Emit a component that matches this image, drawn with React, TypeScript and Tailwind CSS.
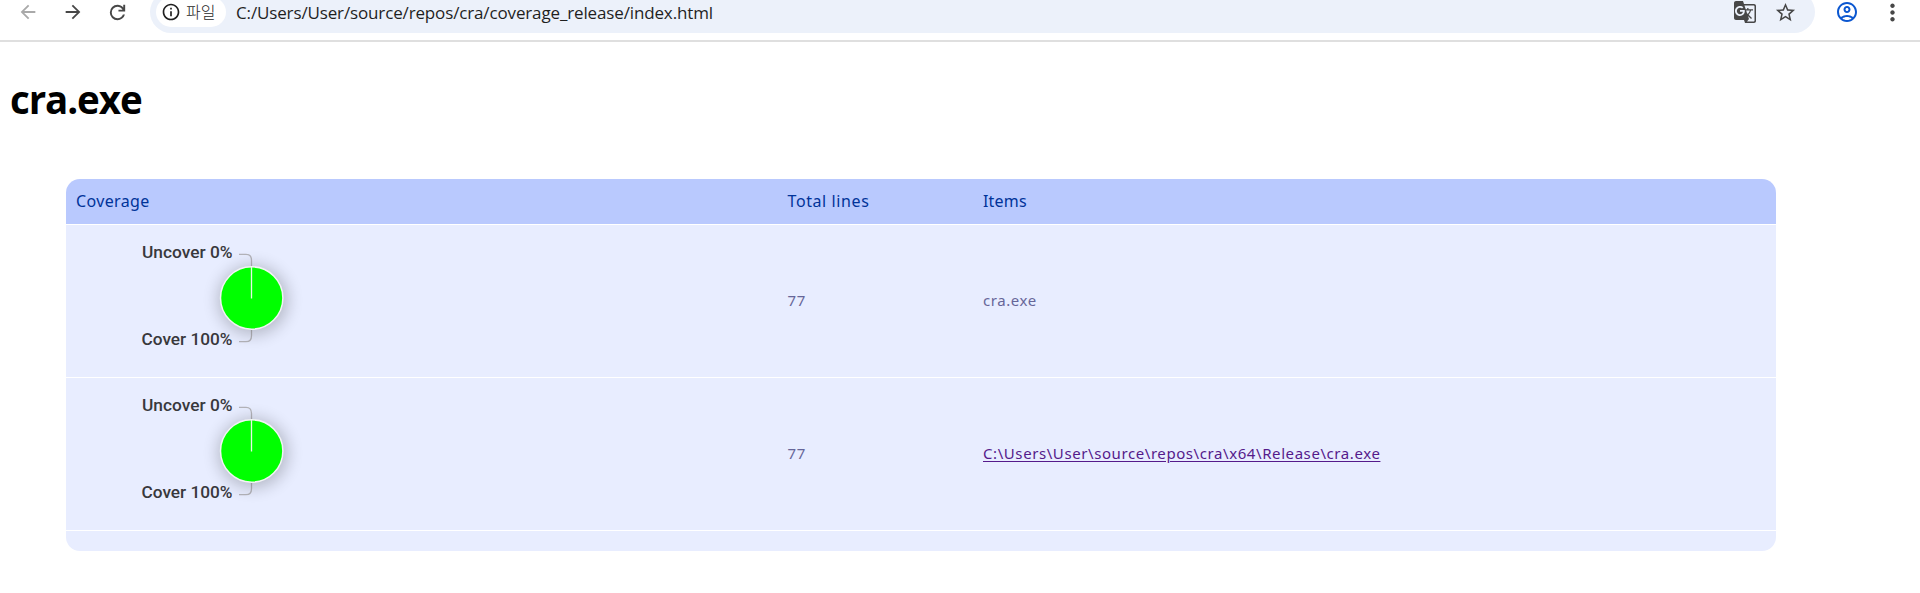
import React from "react";
import {
  MdArrowBack,
  MdArrowForward,
  MdGTranslate,
  MdInfoOutline,
  MdMoreVert,
  MdOutlineAccountCircle,
  MdStarBorder,
} from "react-icons/md";

function ReloadIcon() {
  return (
    <svg viewBox="0 -960 960 960" className="size-[23px] fill-current">
      <path d="M480-160q-134 0-227-93t-93-227q0-134 93-227t227-93q69 0 132 28.5T720-690v-110h80v280H520v-80h168q-32-56-87.5-88T480-720q-100 0-170 70t-70 170q0 100 70 170t170 70q77 0 139-44t87-116h84q-28 106-114 173t-196 67Z" />
    </svg>
  );
}

function Toolbar() {
  return (
    <header className="flex h-[42px] items-start border-b-2 border-[#dfdfdf] bg-white">
      <div className="-mt-[9px] flex h-[42px] w-full items-center text-[#474747]">
        <MdArrowBack className="ml-[17px] size-[22px] shrink-0 text-[#a9a9a9]" />
        <MdArrowForward className="ml-[23px] size-[22px] shrink-0" />
        <span className="ml-[22px] shrink-0">
          <ReloadIcon />
        </span>
        <div className="ml-[21px] flex h-[42px] w-[1665px] shrink-0 items-center rounded-full bg-[#ecf1fa] pl-[6px]">
          <div className="flex h-[30px] w-[70px] shrink-0 items-center rounded-full bg-white pl-[5px] text-[#1f1f1f]">
            <MdInfoOutline className="size-5 shrink-0" />
            <span className="ml-[5px] pb-[2px] font-['Noto_Sans_CJK_KR',sans-serif] text-[16px] leading-5 font-light whitespace-nowrap">
              파일
            </span>
          </div>
          <span className="ml-[10px] pt-[2px] font-['Open_Sans',sans-serif] text-[17px] leading-6 tracking-[-0.14px] whitespace-nowrap text-[#1f1f1f]">
            C:/Users/User/source/repos/cra/coverage_release/index.html
          </span>
          <MdGTranslate className="mr-[17px] ml-auto size-6" />
          <MdStarBorder className="mr-[18px] size-[23px]" />
        </div>
        <MdOutlineAccountCircle className="ml-[20px] size-6 shrink-0 text-[#0b57d0]" />
        <MdMoreVert className="ml-[20px] size-[27px] shrink-0" />
      </div>
    </header>
  );
}

function CoverageChart() {
  return (
    <svg width="360" height="152" viewBox="0 0 360 152" className="block">
      <defs>
        <filter id="shade" x="-60%" y="-60%" width="220%" height="220%">
          <feGaussianBlur stdDeviation="8" />
        </filter>
      </defs>
      <g className="fill-[#38383c] font-['Roboto',sans-serif] text-[16px] font-medium">
        <text x="76" y="32.6" textLength="90.5" lengthAdjust="spacingAndGlyphs">
          Uncover 0%
        </text>
        <text x="75.5" y="120" textLength="91" lengthAdjust="spacingAndGlyphs">
          Cover 100%
        </text>
      </g>
      <g fill="none" stroke="#b4b4ba" strokeWidth="1.3">
        <path d="M173 29.3h7q5.5 0 5.5 6v7" />
        <path d="M173 116.7h7q5.5 0 5.5-6v-7" />
      </g>
      <circle cx="187" cy="75" r="35" fill="#000" opacity=".22" filter="url(#shade)" />
      <circle cx="185.7" cy="73" r="31.2" fill="#0f0" stroke="#f2f4f4" strokeWidth="1.5" />
      <path d="M185.5 42v31.5" stroke="#e6f7e6" strokeWidth="1.3" />
    </svg>
  );
}

const rows = [
  { lines: 77, item: "cra.exe", linked: false },
  { lines: 77, item: "C:\\Users\\User\\source\\repos\\cra\\x64\\Release\\cra.exe", linked: true },
];

export default function App() {
  return (
    <div className="h-[593px] overflow-hidden bg-white">
      <Toolbar />
      <h1 className="mt-[27px] ml-[10px] h-[61px] font-['Open_Sans',sans-serif] text-[38.5px] leading-[60px] font-bold tracking-[-1.1px] text-black">
        cra.exe
      </h1>
      <main className="mt-[49px] ml-[66px] w-[1710px] overflow-hidden rounded-[14px] font-['Noto_Sans',sans-serif] text-[15px] text-[#666699]">
        <div className="grid h-[46px] grid-cols-[711px_196px_1fr] items-center border-b border-white bg-[#b9c9fe] pb-px text-[16px] text-[#003399]">
          <span className="pl-[10px] tracking-[0.35px]">Coverage</span>
          <span className="pl-[10.5px] tracking-[0.6px]">Total lines</span>
          <span className="pl-[10px] tracking-[0.2px]">Items</span>
        </div>
        {rows.map((row) => (
          <div
            key={row.item}
            className="grid h-[153px] grid-cols-[711px_196px_1fr] items-center border-b border-white bg-[#e8edff]"
          >
            <CoverageChart />
            <span className="pb-[2px] pl-[10.5px] tracking-[0.58px]">{row.lines}</span>
            <span className="pb-[2px] pl-[10px] tracking-[0.58px]">
              {row.linked ? (
                <a href="#" className="text-[#551a8b] underline underline-offset-2">
                  {row.item}
                </a>
              ) : (
                row.item
              )}
            </span>
          </div>
        ))}
        <div className="h-5 bg-[#e8edff]" />
      </main>
    </div>
  );
}
